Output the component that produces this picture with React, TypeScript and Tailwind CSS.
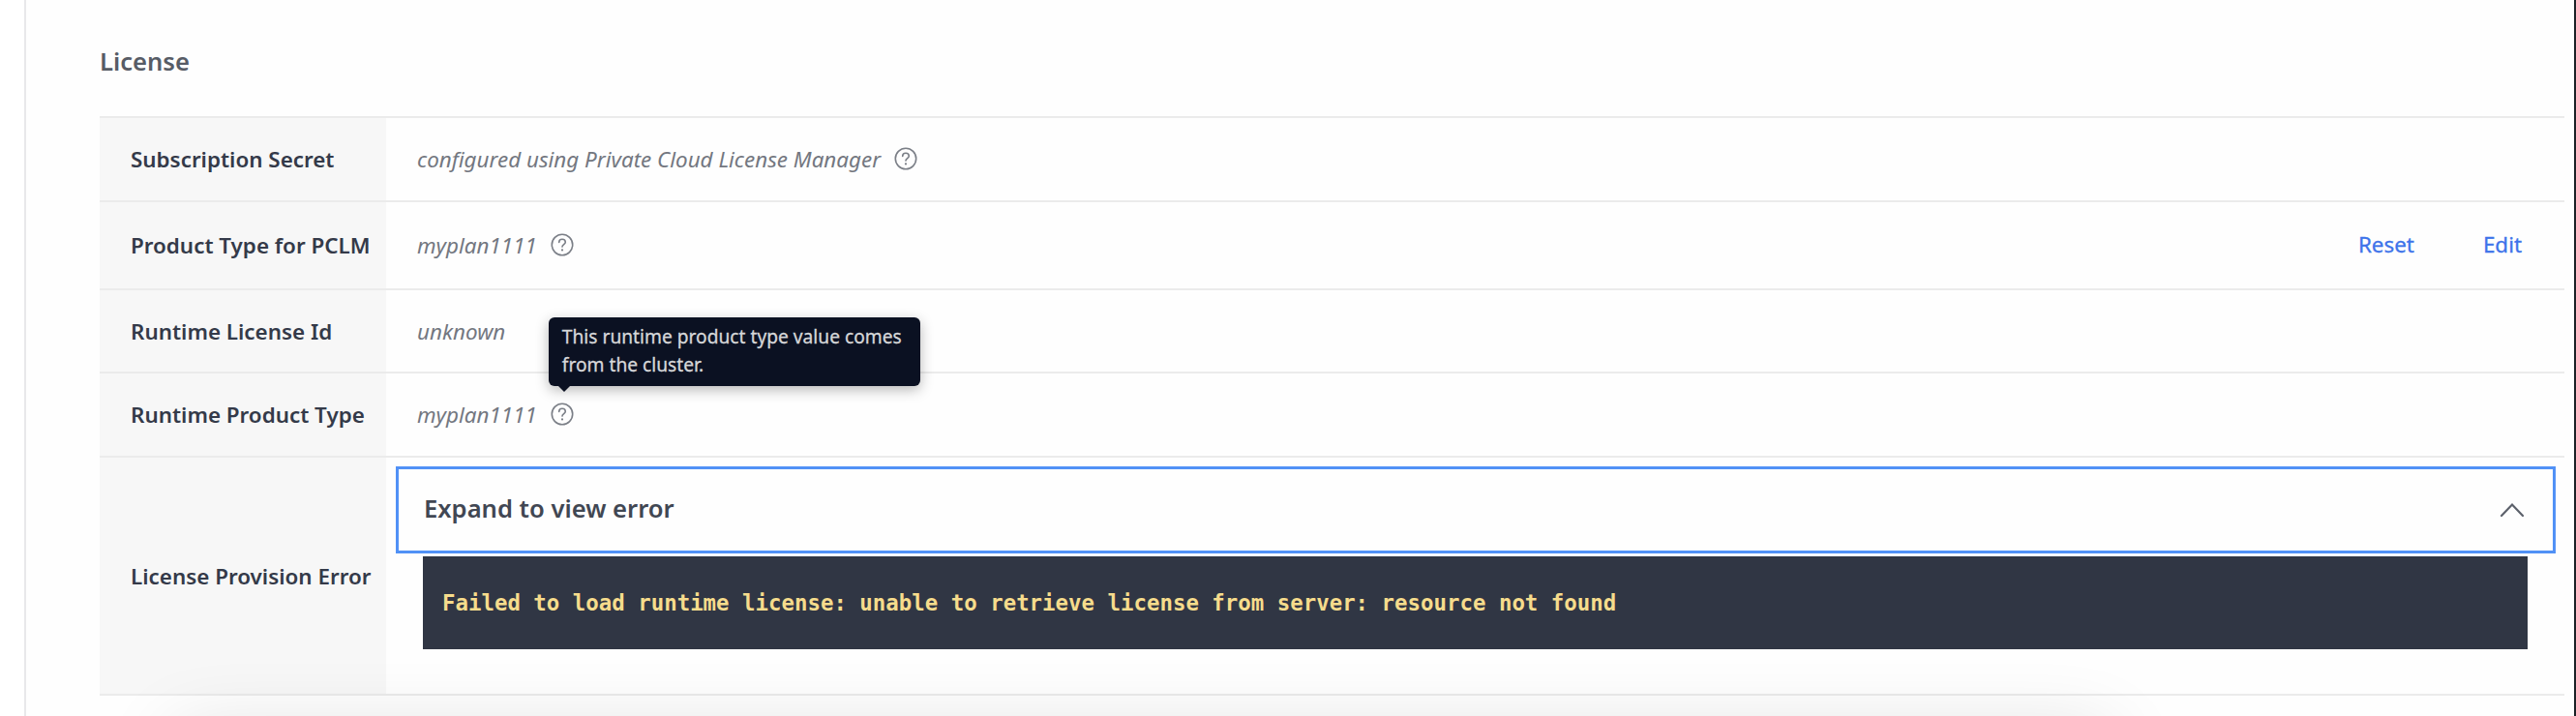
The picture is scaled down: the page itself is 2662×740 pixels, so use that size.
import React from "react";

function HelpIcon() {
  return (
    <svg viewBox="0 0 24 24" className="h-[24px] w-[24px] shrink-0 text-[#7b7f87]" fill="none" stroke="currentColor" strokeWidth="1.6" strokeLinecap="round">
      <circle cx="12" cy="12" r="10.7" />
      <path d="M8.7 9.4C8.7 7.5 10.1 6.2 12 6.2C13.9 6.2 15.3 7.5 15.3 9.2C15.3 11.5 12 11.7 12 14.1" />
      <circle cx="12" cy="17.4" r="1.1" fill="currentColor" stroke="none" />
    </svg>
  );
}

function Tooltip() {
  return (
    <div className="absolute bottom-[41px] left-[-2px] h-[71px] w-[384px] rounded-[6px] bg-[#0b1122] pl-[14px] pt-[6px] text-[19.2px] leading-[28.8px] not-italic text-[#d6d7d9] shadow-[0_4px_14px_rgba(0,0,0,0.28)] [-webkit-text-stroke:0.3px_#d6d7d9]">
      This runtime product type value comes
      <br />
      from the cluster.
      <svg viewBox="0 0 14 7" className="absolute left-[9px] top-[70px] h-[7px] w-[14px]">
        <path d="M0 0H14L7 7Z" fill="#0b1122" />
      </svg>
    </div>
  );
}

type RowProps = { label: string; height: string; children: React.ReactNode };

function Row({ label, height, children }: RowProps) {
  return (
    <div className={`flex border-b-2 border-[#ebebeb] ${height}`}>
      <div className="flex w-[296px] shrink-0 items-center whitespace-nowrap bg-[#f7f7f7] pl-[32px] pt-px text-[22.4px] font-semibold text-[#343a49]">
        {label}
      </div>
      <div className="flex min-w-0 flex-1 items-center">{children}</div>
    </div>
  );
}

function Value({ text, help, tooltip }: { text: string; help?: boolean; tooltip?: boolean }) {
  return (
    <div className="flex items-center gap-[14px] whitespace-nowrap pl-[32px] text-[22.4px] italic text-[#737780]">
      <span className="pt-px">{text}</span>
      {help && (
        <span className="relative flex">
          <HelpIcon />
          {tooltip && <Tooltip />}
        </span>
      )}
    </div>
  );
}

export default function App() {
  return (
    <div className="relative flex h-[740px] w-[2662px] overflow-hidden bg-white font-['Noto_Sans',sans-serif]">
      <div className="w-[25px] shrink-0" />
      <main className="w-[2635px] shrink-0 border-l-2 border-[#e8e8ea] bg-[#fefefe] pl-[76px] pr-[10px]">
        <h2 className="flex h-[120px] items-center pt-[8px] text-[25.6px] font-semibold text-[#575c66]">License</h2>
        <section className="border-t-2 border-[#ebebeb]">
          <Row label="Subscription Secret" height="h-[87px]">
            <Value text="configured using Private Cloud License Manager" help />
          </Row>
          <Row label="Product Type for PCLM" height="h-[91px]">
            <Value text="myplan1111" help />
            <div className="ml-auto flex gap-[71px] pb-px pr-[44px] text-[22.4px] text-[#3d73ea] [-webkit-text-stroke:0.3px_#3d73ea]">
              <button>Reset</button>
              <button>Edit</button>
            </div>
          </Row>
          <Row label="Runtime License Id" height="h-[86px]">
            <Value text="unknown" />
          </Row>
          <Row label="Runtime Product Type" height="h-[87px]">
            <Value text="myplan1111" help tooltip />
          </Row>
          <Row label="License Provision Error" height="h-[246px]">
            <div className="w-full self-start pl-[10px] pr-[9px] pt-[9px]">
              <button className="flex h-[90px] w-full items-center justify-between border-3 border-[#5191f6] pl-[26px] pr-[29px] text-[25.6px] font-semibold text-[#414753]">
                <span className="pb-px">Expand to view error</span>
                <svg viewBox="0 0 26 16" className="h-[16px] w-[26px]" fill="none" stroke="#5c616b" strokeWidth="2.2" strokeLinecap="round">
                  <path d="M2 14L13 2.6L24 14" />
                </svg>
              </button>
              <pre className="ml-[28px] mr-[29px] mt-[3px] flex h-[96px] items-center bg-[#303644] pl-[20px] pt-[2px] font-['DejaVu_Sans_Mono',monospace] text-[22.4px] font-bold text-[#f6dc8c]">
                Failed to load runtime license: unable to retrieve license from server: resource not found
              </pre>
            </div>
          </Row>
        </section>
      </main>
      <div className="w-[2px] shrink-0 bg-[#1c2126]" />
      <div className="pointer-events-none absolute left-[180px] top-[758px] h-[60px] w-[2000px] shadow-[0_0_80px_rgba(0,0,0,0.14)]" />
    </div>
  );
}
